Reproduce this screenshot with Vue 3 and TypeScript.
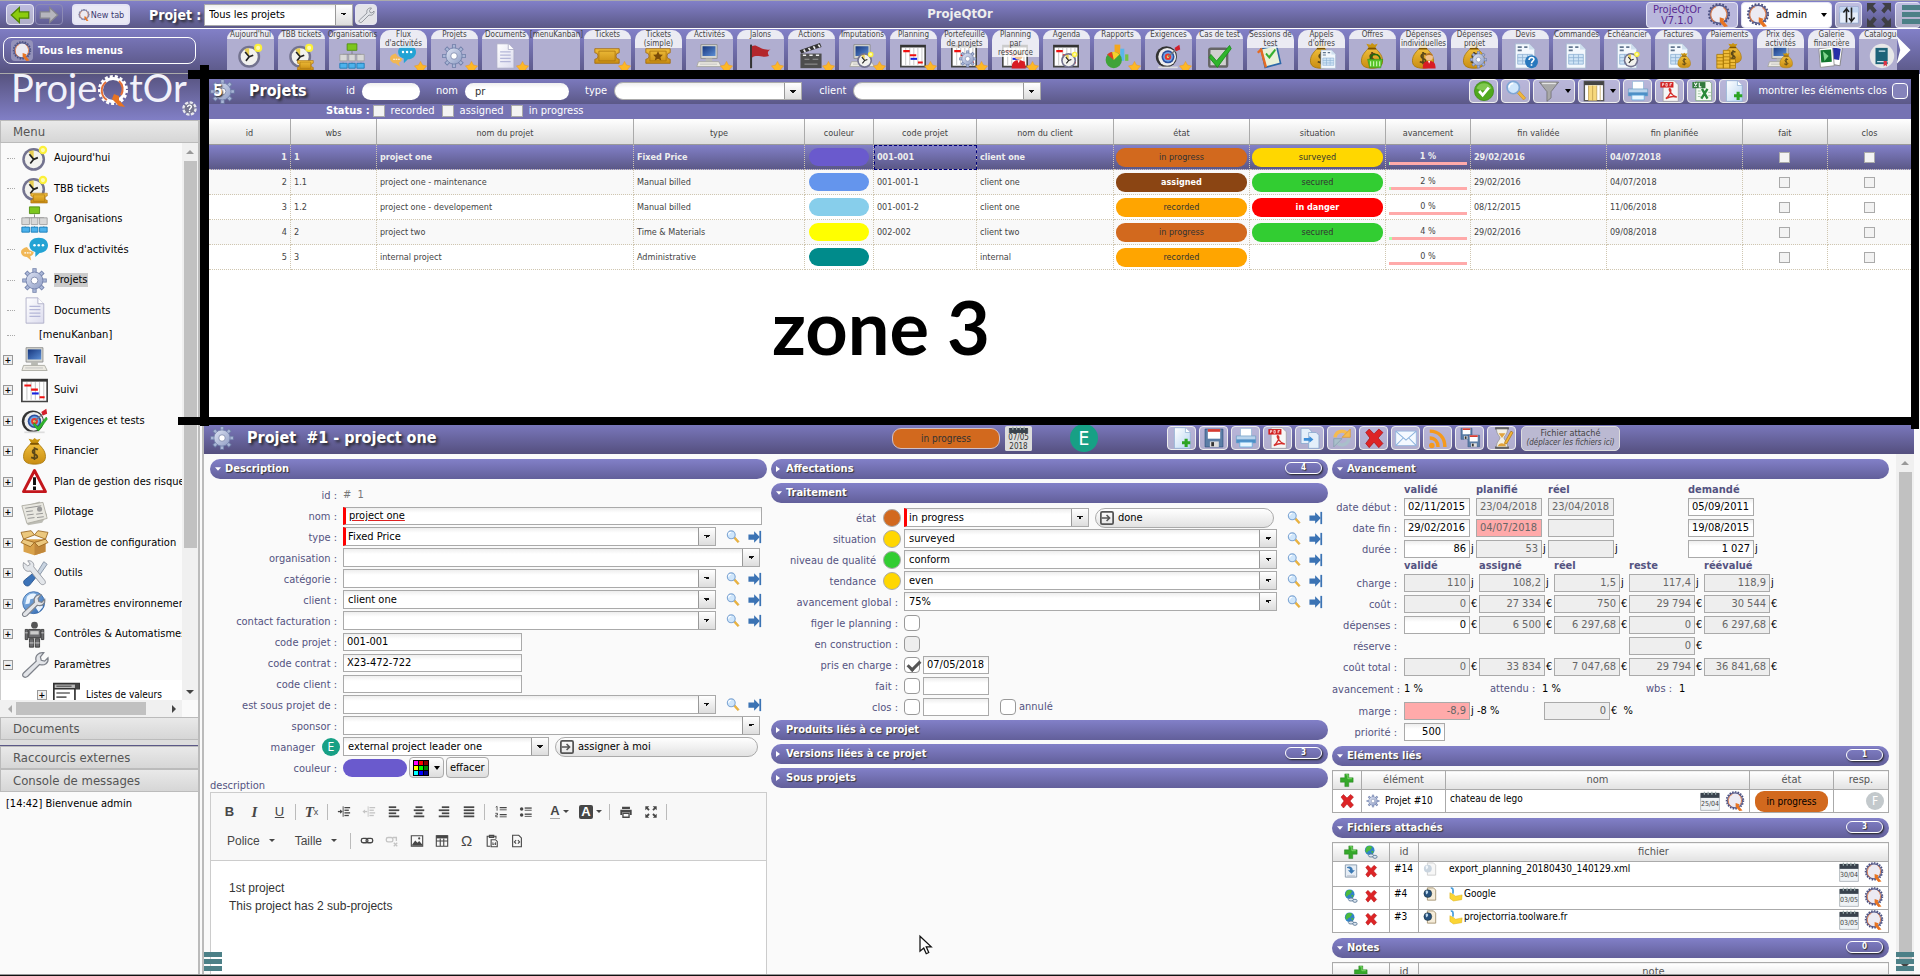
<script setup lang="ts">
import { h } from 'vue'

const at = (x: number, y: number, s: number, body: string) => `<g transform="translate(${x} ${y}) scale(${s})">${body}</g>`

const gearTeeth = '<g stroke="#6f7ea8" stroke-width="5"><path d="M16 1.500v29M1.500 16h29M5.800 5.800l20.400 20.400M26.200 5.800L5.800 26.200"/></g><g stroke="#a9b6d6" stroke-width="3"><path d="M16 2.500v27M2.500 16h27M6.500 6.500l19 19M25.500 6.500L6.500 25.500"/></g>'
const gear = gearTeeth + '<circle cx="16" cy="16" r="10" fill="url(#gSteel)" stroke="#6f7ea8"/><circle cx="16" cy="16" r="4" fill="#fff" stroke="#7b87aa"/>'
const clock = '<circle cx="15" cy="17" r="13.500" fill="#73738f"/><circle cx="15" cy="17" r="10.500" fill="#f2f2ee"/><path d="M15 17L9 8a10.500 10.500 0 0 1 6-1.500z" fill="#e8cf55"/><path d="M10 11l5 6-4 5M15 17l5-2" fill="none" stroke="#222" stroke-width="2"/><circle cx="26" cy="6" r="5" fill="#fbf03a"/><circle cx="26" cy="6" r="2.500" fill="#fffbb0"/>'
const ticket = '<path d="M1 7h30v5a4 4 0 0 0 0 8v5H1v-5a4 4 0 0 0 0-8z" fill="url(#gGold)" stroke="#a36a0c"/><path d="M6 10h20v12H6z" fill="none" stroke="#a9740f"/>'
const doc = '<path d="M6 1h14l7 7v23H6z" fill="url(#gDoc)" stroke="#a9a9c4"/><path d="M20 1v7h7" fill="#fff" stroke="#a9a9c4"/><path d="M10 11h13M10 15h13M10 19h13M10 23h13" stroke="#b4b6d8" stroke-width="1.500"/>'
const form = '<path d="M4 1h17l7 7v23H4z" fill="#f3f8fd" stroke="#9fb4cc"/><path d="M21 1v7h7" fill="#cfe0ef"/><path d="M7 5h5M15 5h4M7 9h5" stroke="#61768f" stroke-width="2"/><path d="M7 14h18v12H7zM7 18h18M7 22h18M13 14v12M19 14v12" fill="#cfe4f6" stroke="#8fb2d4"/>'
const pc = '<path d="M6 2h20v17H6z" fill="#d7d8d2" stroke="#888"/><path d="M8 4h16v12H8z" fill="url(#gScreen)"/><path d="M12 19h8v4h-8z" fill="#b9bab4"/><path d="M3 23h25l3 6H1z" fill="#eceae2" stroke="#a5a59d"/><path d="M5 26h21" stroke="#bbb"/>'
const bag = '<path d="M12 6l-3-5 5 1 2-2 3 2 4-1-3 5z" fill="#c99410"/><path d="M12 6h8c3 4 9 8 9 16 0 6-4 9-13 9S3 28 3 22c0-8 6-12 9-16z" fill="url(#gGold)" stroke="#a87708"/><path d="M11 7h10" stroke="#7b5200" stroke-width="2"/><path d="M20 14c-5-3-9 3-4 5s5 7-4 4M16 11v15" fill="none" stroke="#5a4718" stroke-width="2"/>'
const gantt = '<path d="M1 3h30v26H1z" fill="#fff" stroke="#444" stroke-width="2"/><path d="M1 4h30" stroke="#333" stroke-width="3"/><path d="M7 6v21M12 6v21M17 6v21M22 6v21M27 6v21" stroke="#bbb"/><path d="M4 10h8M12 15h8M22 24h6" stroke="#f01010" stroke-width="2.500"/><path d="M13 19.500h8" stroke="#1522e0" stroke-width="2.500"/>'
const target = '<circle cx="14" cy="17" r="13" fill="#333"/><circle cx="15" cy="17" r="11" fill="#eee"/><circle cx="16" cy="17" r="8" fill="#2b4f9e"/><circle cx="16" cy="17" r="6" fill="#6ea4e8"/><circle cx="16" cy="17" r="4" fill="#e8372f"/><circle cx="16" cy="17" r="1.500" fill="#f6e06a"/><path d="M16 17L27 7" stroke="#777" stroke-width="1.500"/><path d="M24 6l6-4 1 6-5 2z" fill="#d31f2b"/><path d="M4 30h24" stroke="#ddd" stroke-width="2"/>'
const tick = '<path d="M6 14l7 8L29 3l2 4-17 23L4 18z" fill="#2fb52c" stroke="#168a17"/>'
const man = '<circle cx="16" cy="9" r="7" fill="#f0c090"/><path d="M9 8c0-8 14-8 14 0-4-3-10-3-14 0z" fill="#b5731e"/><path d="M4 31c0-12 5-14 12-14s12 2 12 14z" fill="#d81c24"/><path d="M14 17l2 5 2-5z" fill="#fff"/>'
const glob = '<circle cx="15" cy="15" r="13" fill="url(#gGlobe)" stroke="#3869a8"/><path d="M7 8c4-5 9-4 11-3l-3 5-4 1-1 5-5 1zM17 14l7 1 2 5-5 6-3-4z" fill="#e9f4ff"/>'
const wrench = '<path d="M3 26L18 12c-2-6 3-11 9-10l-4 5 1 4 4 1 4-4c1 6-4 10-10 8L8 30c-4 3-8-1-5-4z" fill="#e2e4e8" stroke="#7d8189" stroke-width="1.500"/>'
const basket = '<path d="M6 14C7 0 25 0 26 14" fill="none" stroke="#1d6b0e" stroke-width="3"/><path d="M1 13h30l-4 17H5z" fill="#57c328" stroke="#2d8412"/><path d="M7 17v10M13 17v10M19 17v10M25 17v10" stroke="#d9ffc4" stroke-width="2"/>'
const floppy = '<path d="M3 3h26v26H3z" fill="#5b7ea6" stroke="#2d4f7d"/><path d="M7 3h18v14H7z" fill="#fff"/><path d="M7 3h18v4H7z" fill="#d73c32"/><path d="M10 21h13v8H10z" fill="#ddd"/><path d="M12 22h4v6h-4z" fill="#333"/>'
const linkGlobe = '<circle cx="13" cy="12" r="11" fill="#3183c8"/><path d="M5 6c5-6 12-3 14-1l-5 7-5 2-2 4-4-4zM16 13l6 1-3 6z" fill="#4cba3c"/><g fill="#dce6f0" stroke="#5c7896" stroke-width="2"><ellipse cx="16" cy="24" rx="6" ry="3.500"/><ellipse cx="25" cy="27" rx="5" ry="3.500"/></g>'
const grayLines = (rows: number[][], c = '#474747') => rows.map(([x, y, w, t]) => `<path d="M${x} ${y}h${w}" stroke="${c}" stroke-width="${t || 3}"/>`).join('')

const icons: Record<string, string> = {
  gear, clock, ticket, doc, form, pc, bag, gantt, target, wrench,
  clockTicket: clock + at(11, 17, 0.65, ticket),
  org: '<path d="M16 10v4M5 18v-4h22v4M16 14v4M5 24v2M16 24v2M27 24v2" stroke="#777" fill="none"/><path d="M10 1h12v8H10z" fill="#7cc61e" stroke="#4b8a0b"/><g fill="#d8d8d8" stroke="#9b9b9b"><path d="M1 14h9v8H1zM12 14h8v8h-8zM22 14h9v8h-9z"/></g><g fill="#4cb2ec" stroke="#1478b4"><path d="M1 25h9v6H1zM12 25h8v6h-8zM22 25h9v6h-9z"/></g>',
  chat: '<path d="M21 2c7 0 11 4 11 9s-4 9-10 9l-5 5v-6c-4-1-7-4-7-8 0-5 4-9 11-9z" fill="#23a3d4"/><g fill="#fff"><circle cx="16" cy="11" r="1.500"/><circle cx="21" cy="11" r="1.500"/><circle cx="26" cy="11" r="1.500"/></g><path d="M7 13c-4 1-7 3-7 6s3 6 7 6l5 4-1-5c3-1 4-3 4-5l-5-2-3-4z" fill="#f1b755"/><path d="M4 20h8" stroke="#fff" stroke-width="1.500" stroke-dasharray="2 1"/>',
  ticketStar: ticket + '<path d="M16 10l2 4 4 .5-3 3 1 4-4-2-4 2 1-4-3-3 4-.5z" fill="#7a4c08"/>',
  flag: '<path d="M5 2v29" stroke="#333" stroke-width="2.500"/><path d="M6 4c7-4 10 6 23 4-6 3-2 7-2 8-8 3-14-3-21 2z" fill="#b3262c"/>',
  clap: '<path d="M3 13h26v18H3z" fill="#4d4d4d"/><path d="M2 9L27 0l2 5L4 13z" fill="#333"/><path d="M7 8l2 3M13 6l2 3M19 4l2 3M25 2l2 3M6 15h4M14 15h4M22 15h4" stroke="#eee" stroke-width="2"/><path d="M8 20h6M18 20h7M8 26h16" stroke="#aaa"/>',
  pcClock: pc + at(9, 10, 0.68, clock),
  ganttGear: gantt + at(9, 8, 0.72, gear),
  ganttMan: gantt + at(9, 9, 0.72, man),
  ganttClock: gantt + at(9, 10, 0.68, clock),
  chart: '<path d="M13 2h7v20h-7z" fill="#f4a71e"/><path d="M20 7h5v15h-5z" fill="#58b7ea"/><path d="M26 14h4v8h-4z" fill="#73c343"/><circle cx="12" cy="21" r="10" fill="#3fa339"/><path d="M12 21L4 14a10 10 0 0 1 6-3z" fill="#e33a22"/><path d="M12 21l-2-10a10 10 0 0 1 9 3z" fill="#f7cf2d"/>',
  checkBox: '<rect x="4" y="7" width="22" height="22" rx="2" fill="#d0d0d0" stroke="#666" stroke-width="3"/>' + tick,
  session: '<path d="M5 7l19-4 5 22-19 5z" fill="#e9f1d8" stroke="#2c67a8" stroke-width="2"/><path d="M1 12l4-4 6 22" stroke="#e56b22" stroke-width="3" fill="none"/>' + at(9, 6, 0.45, tick),
  bagDoc: bag + at(13, 8, 0.75, form),
  bagBasket: bag + at(10, 12, 0.62, basket),
  bagMan: bag + at(13, 11, 0.66, man),
  bagGear: bag + at(10, 9, 0.72, gear),
  docQ: form + '<circle cx="24" cy="23" r="8" fill="#2878bd"/><path d="M21 21c0-4 6-4 6-1 0 2-3 2-3 5M24 26v2" stroke="#fff" stroke-width="2" fill="none"/>',
  docClock: form + at(11, 10, 0.66, clock),
  docBag: form + at(14, 12, 0.6, bag),
  coins: at(8, 0, 0.8, bag) + '<g fill="#f0bd3a" stroke="#a87708"><path d="M1 14h8v17H1zM9 9h8v22H9zM17 20h7v11h-7z"/></g><path d="M1 18h8M1 22h8M1 26h8M9 13h8M9 17h8M9 21h8M9 25h8M17 24h7M17 28h7" stroke="#a87708"/>',
  pcBag: pc + at(14, 12, 0.6, bag),
  gallery: '<path d="M14 3l16 3-3 22-16-3z" fill="#fff" stroke="#777"/><path d="M16 5l12 2-2 14-12-2z" fill="#252fa8"/><path d="M1 7l17-2 2 23-17 2z" fill="#fff" stroke="#888"/><path d="M3 9l13-1 1 15-13 1z" fill="#12762f"/><path d="M6 10l7 6-5 6z" fill="#7fd58d"/>',
  book: '<circle cx="16" cy="16" r="15" fill="#e8e8e8"/><path d="M8 6h15v20H8z" fill="#1d6378"/><path d="M10 23h13M12 10h8" stroke="#cfe6ee" stroke-width="1.500"/><path d="M18 22v7l2-2 2 2v-7z" fill="#d34"/>',
  star: '<path d="M16 1l5 9 10 2-7 8 1 11-9-5-9 5 1-11-7-8 10-2z" fill="#fdb827" stroke="#ef8f12"/>',
  targetCheck: target + at(12, 10, 0.62, tick),
  warn: '<path d="M16 3l13 25H3z" fill="#fff" stroke="#c3161c" stroke-width="3.500" stroke-linejoin="round"/><path d="M16 11v9M16 22v4" stroke="#111" stroke-width="3.500"/>',
  news: '<path d="M2 9l20-6 9 16-6 9-17 3z" fill="#bdbdb5"/><path d="M1 8l25-4 5 19-24 6z" fill="#e8e7e0" stroke="#aaa99f"/><path d="M5 11l19-3M6 15l8-1M7 19l8-1M8 23l8-1M18 18l8-1M19 22l8-1" stroke="#888"/><circle cx="22" cy="12" r="3" fill="#999"/>',
  box: '<path d="M3 12h26v15l-13 4-13-4z" fill="#d9a24a"/><path d="M16 15v16l13-4V12z" fill="#c1873a"/><path d="M3 12l13 4-5 5L0 16zM29 12l-13 4 5 5 11-5zM3 12L0 4l12-2 4 5zM29 12l3-8-12-2-4 5z" fill="#ecc87e" stroke="#99651f"/>',
  tools: '<path d="M27 2l4 3-9 13-3-3z" fill="#c8d3e0" stroke="#7f8da0"/><path d="M15 15l4 4-9 11c-4 3-9-3-6-6z" fill="#3c73b8" stroke="#244f8a"/><path d="M3 3l5 4 3-2-3-4c5-1 8 3 7 7l13 16c3 4-2 7-5 4L11 13C6 15 1 10 3 3z" fill="#e3e6ea" stroke="#8d9199"/>',
  globeWrench: glob + at(0, 4, 0.88, wrench),
  robot: '<circle cx="16" cy="5" r="4" fill="#555"/><path d="M9 10h14v10H9zM5 10h3v12H5zM24 10h3v12h-3zM10 21h5v10h-5zM17 21h5v10h-5z" fill="#6d6d70" stroke="#333"/><path d="M11 12h10v4H11z" fill="#ccc"/><path d="M5 14h3M24 14h3M10 26h5M17 26h5" stroke="#ddd"/>',
  list: '<path d="M1 2h30v6H1z" fill="#bbb" stroke="#333" stroke-width="2"/><path d="M26 2h5v6h-5z" fill="#444"/><path d="M1 8h25v23H1z" fill="#fff" stroke="#333" stroke-width="2"/><path d="M4 5h18M4 13h16M4 18h12M4 23h9M4 28h14" stroke="#666" stroke-width="2"/>',
  ok: '<circle cx="16" cy="16" r="14" fill="#4fa81d" stroke="#3a8412"/><path d="M5 12a12 12 0 0 1 22 0c-6 4-16 4-22 0z" fill="#80c84f"/><path d="M9 16l5 6 9-11" fill="none" stroke="#fff" stroke-width="4"/>',
  search: '<path d="M17 18l10 11 3-3-10-11z" fill="#efb73c" stroke="#c98f27"/><circle cx="12" cy="11" r="9" fill="#cfe6fb" stroke="#7fa6d4" stroke-width="2.500"/><path d="M6 11a6 6 0 0 1 6-6" stroke="#fff" stroke-width="2.500" fill="none"/>',
  filter: '<path d="M2 3h28L19 17v9l-6 5V17z" fill="#a8a8a8" stroke="#666"/><path d="M6 5h20" stroke="#e5e5e5" stroke-width="2"/>',
  columns: '<path d="M2 2h28v28H2z" fill="#fff" stroke="#555" stroke-width="2"/><path d="M2 5h28" stroke="#444" stroke-width="5"/><path d="M8 8h12v22H8z" fill="#f7d87c"/><path d="M8 8v22M14 8v22M20 8v22M25 8v22" stroke="#b59447"/>',
  print: '<path d="M8 2h16v12H8z" fill="#fff" stroke="#8db4d6"/><path d="M2 13h28v10H2z" fill="#b9d4ec" stroke="#6f9cc4"/><path d="M2 18h28v5H2z" fill="#4d8fc6"/><path d="M7 22h18v7H7z" fill="#e8f6ff" stroke="#57a6dd"/>',
  pdf: '<path d="M6 1h16l6 6v24H6z" fill="#f6f6f6" stroke="#999"/><path d="M2 3h19v8H2z" fill="#d21f1f"/><path d="M5 9V5h2v2H5M10 5v4h2V5zM16 9V5h3M16 7h2" stroke="#fff" fill="none"/><path d="M10 27c6-5 9-12 6-14s0 9 10 12c-7-3-12 0-16 2z" fill="none" stroke="#d5302b" stroke-width="2"/>',
  excel: '<path d="M7 2h20l3 3v25H7z" fill="#f5fbf3" stroke="#6a9a6c"/><path d="M2 3h19v9H2z" fill="#317a3c"/><path d="M5 4l3 6M9 4l-4 6M12 4v6h3" stroke="#fff" stroke-width="1.500" fill="none"/><path d="M16 13l8 14M24 13l-9 14" stroke="#2a8a3a" stroke-width="3.500"/><path d="M10 16h4M10 20h4M10 24h4M25 18h4M25 23h4" stroke="#7fb384"/>',
  newDoc: '<path d="M5 1h16l7 7v23H5z" fill="url(#gNew)" stroke="#8badd2"/><path d="M21 1v7h7" fill="#fff" stroke="#8badd2"/><path d="M22 17v12M16 23h12" stroke="#2ca423" stroke-width="4.500"/>',
  floppy,
  copy: '<path d="M3 2h11l4 4v18H3z" fill="#e4effa" stroke="#7da2cb"/><path d="M14 8h11l4 4v19H14z" fill="#e4effa" stroke="#7da2cb"/><path d="M7 16h8v-3l6 5-6 5v-3H7z" fill="#3d8ed8"/>',
  refresh: '<g fill="none" stroke-width="5"><path d="M6 15a10 10 0 0 1 17-6" stroke="#f4bb50"/><path d="M26 17a10 10 0 0 1-17 6" stroke="#a9bfca"/></g><path d="M28 3v12H16z" fill="#f4bb50" stroke="#d8982e"/><path d="M4 29V17h12z" fill="#a9bfca" stroke="#7f9aa9"/>',
  cross: '<path d="M4 8l5-5 7 7 7-7 6 5-7 8 7 8-6 6-7-8-7 8-5-6 6-8z" fill="#dd2426" stroke="#a80f12" stroke-linejoin="round"/>',
  mail: '<path d="M1 6h30v21H1z" fill="#f4f9ff" stroke="#89b1dc"/><path d="M1 6l15 13L31 6M1 27l11-11M31 27L20 16" fill="none" stroke="#89b1dc" stroke-width="1.500"/>',
  rss: '<g fill="none" stroke="#f59a1c" stroke-width="5"><path d="M4 6c13 0 22 9 22 23M4 16c7 0 12 5 12 13"/></g><circle cx="7" cy="27" r="4" fill="#f59a1c"/>',
  disks: at(1, 0, 0.62, floppy) + at(11, 10, 0.65, floppy),
  glass: '<path d="M6 2h20M6 30h20" stroke="#555" stroke-width="3"/><path d="M8 3h16c0 8-5 10-5 13s5 5 5 13H8c0-8 5-10 5-13S8 11 8 3z" fill="#f4f1e6" stroke="#888"/><path d="M11 9h10l-5 7zM10 28c1-6 10-6 12 0z" fill="#e0a33c"/><path d="M29 6l3 2-9 16-3 1v-3z" fill="#f4b535" stroke="#a9700f"/>',
  goto: '<path d="M1 10h13V3l13 13-13 13v-7H1z" fill="#3b73b4"/><path d="M28 2v28" stroke="#3b73b4" stroke-width="4"/>',
  enter: '<rect x="2" y="2" width="28" height="28" rx="3" fill="none" stroke="#555" stroke-width="4"/><path d="M4 16h18M15 9l7 7-7 7" fill="none" stroke="#555" stroke-width="3.500"/>',
  plus: '<path d="M11 2h9v9h10v10H20v10h-9V21H1V11h10z" fill="#35a82a" stroke="#1f7a18"/><path d="M13 4h5v9h9" fill="none" stroke="#83db6e" stroke-width="2"/>',
  linkGlobe,
  download: '<path d="M3 2h26v28H3z" fill="#e5edf5" stroke="#8496a8" stroke-width="2"/><path d="M7 7c6-3 13 0 13 7h5l-8 8-8-8h5c0-3-3-5-7-5z" fill="#3b79b4"/><path d="M7 27h18" stroke="#889"/>',
  globeDoc: '<path d="M10 2h14l5 5v23H10z" fill="#f5ecd9" stroke="#a18f6b" stroke-width="2"/><circle cx="11" cy="15" r="9" fill="#27517d" stroke="#122"/><path d="M6 9c5-3 7 2 5 5l-4 3z" fill="#bcd8ee"/>',
  globeDocPale: '<path d="M10 2h14l5 5v23H10z" fill="#f7f7f7" stroke="#ccc" stroke-width="2"/><circle cx="11" cy="15" r="9" fill="#c9d4df"/><path d="M6 9c5-3 7 2 5 5l-4 3z" fill="#f1f6fa"/>',
  note: '<path d="M2 13l8 4 5 4 15-3-1 11-19 3-8-6z" fill="#fbd534" stroke="#d6a90e"/><path d="M4 3c5-2 6 3 5 12" stroke="#4b9fdd" stroke-width="4" fill="none"/>',
  cal: '<path d="M1 4h30v27H1z" fill="#eef2f5" stroke="#8f979f"/><path d="M1 3h30v8H1z" fill="#39424d"/><path d="M7 1v5M13 1v5M19 1v5M25 1v5" stroke="#9aa" stroke-width="2"/>',
  q: '<circle cx="16" cy="15" r="13.500" fill="none" stroke="#4a5080" stroke-width="2.500" stroke-dasharray="2.500 2"/><circle cx="16" cy="15" r="12" fill="#eceaf2" stroke="#54598a" stroke-width="2"/><path d="M10 25a11.500 11.500 0 0 1 2-20M22 6a11 11 0 0 1 2 16" fill="none" stroke="#dd8050" stroke-width="1.500"/><path d="M17 19l6 2-1 3 6 7-5 1-6-7z" fill="#e87422"/>',
  logoQ: '<circle cx="16" cy="15" r="13.500" fill="none" stroke="#fff" stroke-width="3" stroke-dasharray="3 2"/><circle cx="16" cy="15" r="11.500" fill="none" stroke="#fff" stroke-width="3"/><path d="M10 25A11 11 0 0 1 9 7M22 6a11 11 0 0 1 2 14" fill="none" stroke="#e2703a" stroke-width="2"/><path d="M17 19l5 2v4l6 7-6-1-7-7z" fill="#e87422"/>',
  help: '<circle cx="16" cy="16" r="13" fill="#777790" stroke="#e8e8ee" stroke-width="5" stroke-dasharray="7 3"/><path d="M12 13c0-6 9-5 8 0-1 3-4 3-4 6M16 21v3" stroke="#fff" stroke-width="3" fill="none"/>',
  back: '<path d="M15 4v7h15v10H15v7L2 16z" fill="#8ccc0e" stroke="#4e8504" stroke-width="2"/>',
  fwd: '<path d="M17 4v7H2v10h15v7l13-12z" fill="#b6b6bd" stroke="#85858f" stroke-width="2"/>',
  layout: '<path d="M1 3h30v26H1z" fill="#e6eefb" stroke="#7e9cc8"/><path d="M1 4h30v8H1z" fill="#c2d5f0"/><path d="M12 28V6l-5 6M20 4v22l5-6M12 6l4 5M20 26l-4-5" fill="none" stroke="#222" stroke-width="2.500"/>',
  full: '<g fill="#3f3f44"><path d="M0 0h12L8 4l5 6-4 4-5-6-4 4zM32 0v12l-4-4-5 6-4-4 5-6-4-4zM0 32V20l4 4 5-6 4 4-5 6 4 4zM32 32H20l4-4-5-6 4-4 5 6 4-4z"/></g>',
  chevron: '<path d="M8 1l15 15L8 31l4-15z" fill="#fff"/>',
  cursor: '<path d="M8 2v24l6-5 4 9 4-2-4-9h8z" fill="#fff" stroke="#111" stroke-width="2"/>',
  outdent: grayLines([[17, 6, 13, 3], [17, 12, 10, 3], [17, 18, 13, 3], [17, 24, 10, 3], [2, 15, 8, 3]]) + '<path d="M14 3v24" stroke="#474747" stroke-width="2"/><path d="M7 10l6 5-6 5z" fill="#474747"/>',
  indentOff: grayLines([[17, 6, 13, 3], [17, 12, 10, 3], [17, 18, 13, 3], [17, 24, 10, 3], [5, 15, 7, 3]], '#c4c4c4') + '<path d="M14 3v24" stroke="#c4c4c4" stroke-width="2"/><path d="M7 10l-6 5 6 5z" fill="#c4c4c4"/>',
  left: grayLines([[4, 5, 17, 4], [4, 12, 24, 4], [4, 19, 17, 4], [4, 26, 24, 4]]),
  center: grayLines([[8, 5, 16, 4], [4, 12, 24, 4], [8, 19, 16, 4], [4, 26, 24, 4]]),
  right: grayLines([[11, 5, 17, 4], [4, 12, 24, 4], [11, 19, 17, 4], [4, 26, 24, 4]]),
  justify: grayLines([[4, 5, 24, 4], [4, 12, 24, 4], [4, 19, 24, 4], [4, 26, 24, 4]]),
  ol: grayLines([[13, 6, 16, 3], [13, 11, 16, 2], [13, 22, 16, 3], [13, 27, 16, 2]]) + '<path d="M4 5l3-2v10M3 19h5v4H4v4h5" fill="none" stroke="#474747" stroke-width="2"/>',
  ul: grayLines([[13, 7, 16, 3], [13, 12, 16, 2], [13, 21, 16, 3], [13, 26, 16, 2]]) + '<circle cx="6" cy="9" r="4" fill="#474747"/><circle cx="6" cy="23" r="4" fill="#474747"/>',
  printer: '<path d="M7 4h18v5H7zM3 11h26v12h-4v-6H7v6H3z" fill="#474747"/><path d="M9 19h14v9H9z" fill="none" stroke="#474747" stroke-width="3"/>',
  expand: '<g fill="#474747"><path d="M3 3h9L9 6l4 4-3 3-4-4-3 3zM29 3v9l-3-3-4 4-3-3 4-4-3-3zM3 29v-9l3 3 4-4 3 3-4 4 3 3zM29 29h-9l3-3-4-4 3-3 4 4 3-3z"/></g>',
  link: '<g fill="none" stroke="#474747" stroke-width="3"><rect x="3" y="10" width="15" height="10" rx="4"/><rect x="14" y="10" width="15" height="10" rx="4"/></g>',
  unlink: '<g fill="none" stroke="#c4c4c4" stroke-width="3"><rect x="3" y="8" width="15" height="10" rx="4"/><path d="M18 8h8v8M20 20l8 8M28 20l-8 8"/></g>',
  image: '<path d="M3 4h26v24H3z" fill="none" stroke="#474747" stroke-width="2.500"/><path d="M5 24l7-9 5 5 4-4 7 8v3H5z" fill="#474747"/><circle cx="21" cy="10" r="2.500" fill="#474747"/>',
  table: '<path d="M3 4h26v24H3zM3 16h26M12 10v18M20 10v18" fill="none" stroke="#474747" stroke-width="2.500"/><path d="M3 3h26v7H3z" fill="#474747"/>',
  paste: '<path d="M12 28H5V5h20v6M10 3h10v5H10z" fill="none" stroke="#474747" stroke-width="2.500"/><path d="M14 13h10l4 4v12H14z" fill="none" stroke="#474747" stroke-width="2.500"/><path d="M18 19v6l3-3 3 3v-6" fill="none" stroke="#474747" stroke-width="2"/>',
  code: '<path d="M6 3h14l6 6v20H6z" fill="none" stroke="#474747" stroke-width="2.500"/><path d="M14 14l-4 4 4 4M18 14l4 4-4 4" fill="none" stroke="#474747" stroke-width="2.500"/>',
}

const Ico = (p: { n: string }) => h('svg', { viewBox: '0 0 32 32', 'aria-hidden': 'true', innerHTML: icons[p.n] })
Ico.props = ['n']

interface Tab { t: string; i: string; s?: boolean }
const tabs: Tab[] = [
  { t: "Aujourd'hui", i: 'clock' }, { t: 'TBB tickets', i: 'clockTicket' }, { t: 'Organisations', i: 'org' },
  { t: "Flux\nd'activités", i: 'chat', s: true }, { t: 'Projets', i: 'gear', s: true }, { t: 'Documents', i: 'doc', s: true },
  { t: '[menuKanban]', i: '' }, { t: 'Tickets', i: 'ticket', s: true }, { t: 'Tickets\n(simple)', i: 'ticketStar' },
  { t: 'Activités', i: 'pc', s: true }, { t: 'Jalons', i: 'flag', s: true }, { t: 'Actions', i: 'clap', s: true },
  { t: 'Imputations', i: 'pcClock', s: true }, { t: 'Planning', i: 'gantt', s: true }, { t: 'Portefeuille\nde projets', i: 'ganttGear', s: true },
  { t: 'Planning\npar\nressource', i: 'ganttMan', s: true }, { t: 'Agenda', i: 'ganttClock' }, { t: 'Rapports', i: 'chart', s: true },
  { t: 'Exigences', i: 'target', s: true }, { t: 'Cas de test', i: 'checkBox' }, { t: 'Sessions de\ntest', i: 'session' },
  { t: "Appels\nd'offres", i: 'bagDoc' }, { t: 'Offres', i: 'bagBasket' }, { t: 'Dépenses\nindividuelles', i: 'bagMan' },
  { t: 'Dépenses\nprojet', i: 'bagGear' }, { t: 'Devis', i: 'docQ' }, { t: 'Commandes', i: 'form' }, { t: 'Echéancier', i: 'docClock' },
  { t: 'Factures', i: 'docBag' }, { t: 'Paiements', i: 'coins' }, { t: 'Prix des\nactivités', i: 'pcBag' },
  { t: 'Galerie\nfinancière', i: 'gallery' }, { t: 'Catalogue', i: 'book' },
]

const tree = [
  { t: "Aujourd'hui", i: 'clock' }, { t: 'TBB tickets', i: 'clockTicket' }, { t: 'Organisations', i: 'org' },
  { t: "Flux d'activités", i: 'chat' }, { t: 'Projets', i: 'gear', on: true }, { t: 'Documents', i: 'doc' },
  { t: '[menuKanban]', i: '' }, { t: 'Travail', i: 'pc', x: '+' }, { t: 'Suivi', i: 'gantt', x: '+' },
  { t: 'Exigences et tests', i: 'targetCheck', x: '+' }, { t: 'Financier', i: 'bag', x: '+' },
  { t: 'Plan de gestion des risques', i: 'warn', x: '+' }, { t: 'Pilotage', i: 'news', x: '+' },
  { t: 'Gestion de configuration', i: 'box', x: '+' }, { t: 'Outils', i: 'tools', x: '+' },
  { t: 'Paramètres environnement', i: 'globeWrench', x: '+' }, { t: 'Contrôles & Automatismes', i: 'robot', x: '+' },
  { t: 'Paramètres', i: 'wrench', x: '−' }, { t: 'Listes de valeurs', i: 'list', x: '+', sub: true },
]

const cols: [string, number][] = [
  ['id', 82], ['wbs', 86], ['nom du projet', 257], ['type', 171], ['couleur', 69], ['code projet', 103], ['nom du client', 137],
  ['état', 136], ['situation', 136], ['avancement', 85], ['fin validée', 136], ['fin planifiée', 136], ['fait', 85], ['clos', 83],
]
const total = cols.reduce((a, c) => a + c[1], 0)

const rows = [
  { id: 1, wbs: '1', nom: 'project one', type: 'Fixed Price', c: '#6a5acd', code: '001-001', client: 'client one', e: 'in progress', s: 'surveyed', p: 1, v: '29/02/2016', f: '04/07/2018' },
  { id: 2, wbs: '1.1', nom: 'project one - maintenance', type: 'Manual billed', c: '#6495ed', code: '001-001-1', client: 'client one', e: 'assigned', s: 'secured', p: 2, v: '29/02/2016', f: '04/07/2018' },
  { id: 3, wbs: '1.2', nom: 'project one - developement', type: 'Manual billed', c: '#87ceeb', code: '001-001-2', client: 'client one', e: 'recorded', s: 'in danger', p: 0, v: '08/12/2015', f: '11/06/2018' },
  { id: 4, wbs: '2', nom: 'project two', type: 'Time & Materials', c: '#ffff00', code: '002-002', client: 'client two', e: 'in progress', s: 'secured', p: 4, v: '29/02/2016', f: '09/08/2018' },
  { id: 5, wbs: '3', nom: 'internal project', type: 'Administrative', c: '#008b8b', code: '', client: 'internal', e: 'recorded', s: '', p: 0, v: '', f: '' },
]
const cls = (s: string) => 'st-' + s.replace(' ', '-')

const fields = [
  { l: 'nom', k: 'text', v: 'project one', req: true }, { l: 'type', k: 'select', v: 'Fixed Price', req: true, nav: true },
  { l: 'organisation', k: 'select', v: '' }, { l: 'catégorie', k: 'select', v: '', nav: true },
  { l: 'client', k: 'select', v: 'client one', nav: true }, { l: 'contact facturation', k: 'select', v: '', nav: true },
  { l: 'code projet', k: 'short', v: '001-001' }, { l: 'code contrat', k: 'short', v: 'X23-472-722' }, { l: 'code client', k: 'short', v: '' },
  { l: 'est sous projet de', k: 'select', v: '', nav: true }, { l: 'sponsor', k: 'select', v: '' },
]
const treat = [
  { l: 'situation', v: 'surveyed', c: '#ffd700' }, { l: 'niveau de qualité', v: 'conform', c: '#32cd32' },
  { l: 'tendance', v: 'even', c: '#ffd700' }, { l: 'avancement global', v: '75%', c: '' },
]
const checks = [
  { l: 'figer le planning' }, { l: 'en construction', off: true }, { l: 'pris en charge', on: true, d: '07/05/2018' },
  { l: 'fait', d: '' }, { l: 'clos', d: '', more: true },
]

interface Cell { v: string; u?: string; ro?: boolean; bad?: boolean; none?: boolean }
const dates: { l: string; c: Cell[] }[] = [
  { l: 'date début', c: [{ v: '02/11/2015' }, { v: '23/04/2018', ro: true }, { v: '23/04/2018', ro: true }, { v: '', none: true }, { v: '05/09/2011' }] },
  { l: 'date fin', c: [{ v: '29/02/2016' }, { v: '04/07/2018', ro: true, bad: true }, { v: '', ro: true }, { v: '', none: true }, { v: '19/08/2015' }] },
  { l: 'durée', c: [{ v: '86', u: 'j' }, { v: '53', u: 'j', ro: true }, { v: '', u: 'j', ro: true }, { v: '', none: true }, { v: '1 027', u: 'j' }] },
]
const ro = (u: string, ...v: string[]): Cell[] => v.map((x) => ({ v: x, u, ro: true, none: x === '' }))
const costs: { l: string; c: Cell[] }[] = [
  { l: 'charge', c: ro('j', '110', '108,2', '1,5', '117,4', '118,9') },
  { l: 'coût', c: ro('€', '0', '27 334', '750', '29 794', '30 544') },
  { l: 'dépenses', c: [{ v: '0', u: '€' }, ...ro('€', '6 500', '6 297,68', '0', '6 297,68')] },
  { l: 'réserve', c: ro('€', '', '', '', '0', '') },
  { l: 'coût total', c: ro('€', '0', '33 834', '7 047,68', '29 794', '36 841,68') },
]
const files = [
  { id: '#14', n: 'export_planning_20180430_140129.xml', d: '30/04', a: 'download', g: 'globeDocPale' },
  { id: '#4', n: 'Google', d: '03/05', a: 'linkGlobe', g: 'globeDoc', note: true },
  { id: '#3', n: 'projectorria.toolware.fr', d: '03/05', a: 'linkGlobe', g: 'globeDoc', note: true },
]
const listTools = [['ok', 'Valider'], ['search', 'Rechercher'], ['filter', 'Filtrer'], ['columns', 'Colonnes'], ['print', 'Imprimer'], ['pdf', 'PDF'], ['excel', 'Excel'], ['newDoc', 'Nouveau']]
const detailTools = [['newDoc', 'Nouveau'], ['floppy', 'Enregistrer'], ['print', 'Imprimer'], ['pdf', 'PDF'], ['copy', 'Copier'], ['refresh', 'Rafraîchir'], ['cross', 'Supprimer'], ['mail', 'Envoyer'], ['rss', 'Flux'], ['disks', 'Mise à jour multiple'], ['glass', 'Historique']]
const ed1b = ['outdent', 'indentOff', 'left', 'center', 'right', 'justify']
const ed2 = ['link', 'unlink', 'image', 'table', 'omega', 'paste', 'code']
const palette = ['#f0f', '#f00', '#800', '#ff0', '#0f0', '#080', '#0ff', '#00f', '#008']
</script>

<template>
  <div class="app">
    <svg class="defs" aria-hidden="true">
      <defs>
        <linearGradient id="gSteel" x2="1" y2="1"><stop stop-color="#dfe5f4" /><stop offset="1" stop-color="#8e9cc4" /></linearGradient>
        <linearGradient id="gGold" x2="0" y2="1"><stop stop-color="#f0bf3c" /><stop offset="1" stop-color="#c98d12" /></linearGradient>
        <linearGradient id="gDoc" x2="1" y2="1"><stop stop-color="#fff" /><stop offset="1" stop-color="#dcdcee" /></linearGradient>
        <linearGradient id="gNew" x2="1" y2="1"><stop stop-color="#fff" /><stop offset="1" stop-color="#b9d6f2" /></linearGradient>
        <linearGradient id="gScreen" x2="1" y2="1"><stop stop-color="#16357c" /><stop offset="1" stop-color="#5c8fd6" /></linearGradient>
        <linearGradient id="gGlobe" x2="1" y2="1"><stop stop-color="#9cc6f0" /><stop offset="1" stop-color="#2a62ac" /></linearGradient>
      </defs>
    </svg>

    <header class="topbar">
      <button class="tb nav" aria-label="Précédent"><Ico n="back" class="i20" /></button>
      <button class="tb nav dim" aria-label="Suivant"><Ico n="fwd" class="i20" /></button>
      <button class="tb newtab"><Ico n="q" class="i12" />New tab</button>
      <label class="plabel" for="proj">Projet :</label>
      <select id="proj" class="sel projsel"><option>Tous les projets</option></select>
      <button class="tb wr" aria-label="Paramètres"><Ico n="wrench" class="i16" /></button>
      <h1>ProjeQtOr</h1>
      <div class="tright">
        <a class="tb version" href="#"><span>ProjeQtOr<br />V7.1.0</span><Ico n="q" class="i24" /></a>
        <button class="tb admin"><Ico n="q" class="i24" />admin<i class="caret" /></button>
        <button class="tb sq" aria-label="Disposition"><Ico n="layout" class="i20" /></button>
        <button class="tb bare" aria-label="Plein écran"><Ico n="full" class="i24" /></button>
        <button class="tb burgerbtn" aria-label="Menu"><span class="burger"><i /><i /><i /></span></button>
      </div>
    </header>

    <div class="body">
      <aside>
        <div class="allmenus"><button><span class="qbox"><Ico n="q" class="i20" /></span>Tous les menus</button></div>
        <div class="logo"><span>Proje</span><Ico n="logoQ" class="logoq" /><span>tOr</span><Ico n="help" class="helpico" /></div>
        <button class="acc">Menu</button>
        <div class="treewrap">
          <nav class="tree">
            <a v-for="n in tree" :key="n.t" href="#" :class="{ sub: n.sub, flat: !n.i }">
              <span v-if="n.x" class="exp">{{ n.x }}</span><span v-else class="dots" />
              <Ico v-if="n.i" :n="n.i" class="i27" />
              <span class="tl" :class="{ on: n.on }">{{ n.t }}</span>
            </a>
          </nav>
          <div class="vbar"><i class="up" /><b class="treethumb" /><i class="down" /></div>
        </div>
        <div class="hbar"><i class="lf" /><b /><i class="rt" /></div>
        <button class="acc docs">Documents</button>
        <div class="hsplit" />
        <button class="acc">Raccourcis externes</button>
        <button class="acc">Console de messages</button>
        <div class="console">[14:42] Bienvenue admin</div>
      </aside>

      <main>
        <div class="strip">
          <nav class="tabs">
            <a v-for="t in tabs" :key="t.t" href="#" class="tab">
              <span class="tt">{{ t.t }}</span>
              <Ico v-if="t.i" :n="t.i" class="tabico" />
              <Ico v-if="t.s" n="star" class="tabstar" />
            </a>
          </nav>
          <button class="more" aria-label="Suite"><Ico n="chevron" class="chev" /></button>
        </div>

        <section class="list">
          <div class="lhead">
            <Ico n="gear" class="i27" /><b class="five">5</b>
            <h2>Projets</h2>
            <label for="fid">id</label><input id="fid" class="round w58" />
            <label for="fnom">nom</label><input id="fnom" class="round w104" value="pr" />
            <label for="ftype">type</label><select id="ftype" class="sel rsel"><option></option></select>
            <label for="fcl">client</label><select id="fcl" class="sel rsel"><option></option></select>
            <div class="ltools">
              <button v-for="t in listTools" :key="t[0]" class="tool" :aria-label="t[1]" :class="{ wide: t[0] === 'filter' || t[0] === 'columns' }">
                <Ico :n="t[0]" class="i22" /><i v-if="t[0] === 'filter' || t[0] === 'columns'" class="caret" />
              </button>
              <label for="closed">montrer les éléments clos</label><input id="closed" type="checkbox" class="cb ghost" />
            </div>
          </div>
          <div class="lstatus">
            <b>Status :</b>
            <label v-for="s in ['recorded', 'assigned', 'in progress']" :key="s"><input type="checkbox" class="sqcb" />{{ s }}</label>
          </div>
          <table class="grid">
            <colgroup><col v-for="c in cols" :key="c[0]" :style="{ width: (c[1] / total) * 100 + '%' }" /></colgroup>
            <thead><tr><th v-for="c in cols" :key="c[0]">{{ c[0] }}</th></tr></thead>
            <tbody>
              <tr v-for="r in rows" :key="r.id" :class="{ selrow: r.id === 1 }">
                <td class="num">{{ r.id }}</td><td>{{ r.wbs }}</td><td>{{ r.nom }}</td><td>{{ r.type }}</td>
                <td class="pc"><span class="pill" :style="{ background: r.c }" /></td>
                <td :class="{ focus: r.id === 1 }">{{ r.code }}</td><td>{{ r.client }}</td>
                <td class="pc"><span class="pill big" :class="cls(r.e)">{{ r.e }}</span></td>
                <td class="pc"><span v-if="r.s" class="pill big" :class="cls(r.s)">{{ r.s }}</span></td>
                <td class="pc"><div class="pg">{{ r.p }} %</div><div class="bar"><i :style="{ width: r.p + '%' }" /></div></td>
                <td>{{ r.v }}</td><td>{{ r.f }}</td>
                <td class="ck"><input type="checkbox" class="mini" aria-label="fait" /></td>
                <td class="ck"><input type="checkbox" class="mini" aria-label="clos" /></td>
              </tr>
            </tbody>
          </table>
          <div class="zone">zone 3</div>
        </section>

        <section class="detail">
          <div class="dhead">
            <Ico n="gear" class="i26" />
            <h2>Projet &nbsp;#1 - project one</h2>
            <div class="dstate">
              <span class="pill dpill st-in-progress">in progress</span>
              <span class="calbig"><Ico n="cal" class="calhead" /><span>07/05<br />2018</span></span>
              <span class="ava big">E</span>
            </div>
            <div class="dtools">
              <button v-for="t in detailTools" :key="t[0]" class="tool" :aria-label="t[1]"><Ico :n="t[0]" class="i22" /></button>
              <button class="drop"><span>Fichier attaché<br /><em>(déplacer les fichiers ici)</em></span></button>
            </div>
          </div>

          <div class="dbody">
            <div class="columns">
              <div class="col">
                <h3 class="open">Description</h3>
                <div class="form desc">
                  <div class="row"><span class="lab">id :</span><span class="idv">#&nbsp; 1</span></div>
                  <div v-for="f in fields" :key="f.l" class="row">
                    <label class="lab" :for="f.l">{{ f.l }} :</label>
                    <select v-if="f.k === 'select'" :id="f.l" class="sel grow" :class="{ req: f.req, solo: !f.nav }"><option>{{ f.v }}</option></select>
                    <input v-else :id="f.l" :value="f.v" class="inp" :class="[f.k === 'short' ? 'w179' : 'grow', { req: f.req, spell: f.req }]" />
                    <template v-if="f.nav"><button class="ib first" aria-label="Rechercher"><Ico n="search" class="i14" /></button><button class="ib" aria-label="Aller à"><Ico n="goto" class="i14" /></button></template>
                  </div>
                  <div class="row">
                    <label class="lab dot" for="manager">manager</label><span class="ava">E</span>
                    <select id="manager" class="sel w206"><option>external project leader one</option></select>
                    <button class="cap"><Ico n="enter" class="i14" />assigner à moi</button>
                  </div>
                  <div class="row">
                    <span class="lab">couleur :</span><span class="swatch" />
                    <button class="btn" aria-label="Palette"><span class="pal"><i v-for="p in palette" :key="p" :style="{ background: p }" /></span><i class="caret" /></button>
                    <button class="btn">effacer</button>
                  </div>
                </div>
                <label class="dl" for="rich">description</label>
                <div class="editor">
                  <div class="etb">
                    <div class="erow">
                      <button class="e"><b>B</b></button><button class="e"><em>I</em></button><button class="e"><u>U</u></button><i class="sep" />
                      <button class="e"><em>T</em><sub>x</sub></button><i class="sep" />
                      <button v-for="i in ed1b" :key="i" class="e" :aria-label="i"><Ico :n="i" class="i14" /></button><i class="sep" />
                      <button class="e" aria-label="ol"><Ico n="ol" class="i14" /></button><button class="e" aria-label="ul"><Ico n="ul" class="i14" /></button>
                      <button class="e ew first"><b class="ac">A</b><i class="caret" /></button><button class="e ew"><b class="ab">A</b><i class="caret" /></button><i class="sep" />
                      <button class="e" aria-label="imprimer"><Ico n="printer" class="i14" /></button><button class="e" aria-label="agrandir"><Ico n="expand" class="i14" /></button><i class="sep" />
                    </div>
                    <div class="erow">
                      <button class="e et">Police<i class="caret" /></button><button class="e et">Taille<i class="caret" /></button><i class="sep" />
                      <button v-for="i in ed2" :key="i" class="e" :aria-label="i"><b v-if="i === 'omega'" class="om">Ω</b><Ico v-else :n="i" class="i14" /></button>
                    </div>
                  </div>
                  <div id="rich" class="etext" contenteditable="true">1st project<br />This project has 2 sub-projects</div>
                </div>
              </div>

              <div class="col">
                <h3>Affectations<span class="cnt">4</span></h3>
                <h3 class="open">Traitement</h3>
                <div class="form treat">
                  <div class="row">
                    <label class="lab dot" for="etat">état</label><span class="disc st-in-progress" />
                    <select id="etat" class="sel req w185"><option>in progress</option></select>
                    <button class="cap"><Ico n="enter" class="i14" />done</button>
                    <button class="ib first" aria-label="Rechercher"><Ico n="search" class="i14" /></button><button class="ib" aria-label="Aller à"><Ico n="goto" class="i14" /></button>
                  </div>
                  <div v-for="t in treat" :key="t.l" class="row">
                    <label class="lab" :class="{ dot: t.c }" :for="t.l">{{ t.l }}{{ t.c ? '' : ' :' }}</label>
                    <span v-if="t.c" class="disc" :style="{ background: t.c }" />
                    <select :id="t.l" class="sel grow"><option>{{ t.v }}</option></select>
                    <button class="ib first" aria-label="Rechercher"><Ico n="search" class="i14" /></button><button class="ib" aria-label="Aller à"><Ico n="goto" class="i14" /></button>
                  </div>
                  <div v-for="c in checks" :key="c.l" class="row">
                    <label class="lab" :for="'c' + c.l">{{ c.l }} :</label>
                    <input :id="'c' + c.l" type="checkbox" class="cb" :class="{ off: c.off }" :checked="c.on" />
                    <input v-if="c.d !== undefined" class="inp dt" :value="c.d" :aria-label="'date ' + c.l" />
                    <label v-if="c.more" class="ann"><input type="checkbox" class="cb" />annulé</label>
                  </div>
                </div>
                <h3>Produits liés à ce projet</h3>
                <h3>Versions liées à ce projet<span class="cnt">3</span></h3>
                <h3>Sous projets</h3>
              </div>

              <div class="col">
                <h3 class="open">Avancement</h3>
                <div class="av">
                  <div class="g1 hd"><span /><b>validé</b><b>planifié</b><b>réel</b><span /><b>demandé</b></div>
                  <div v-for="d in dates" :key="d.l" class="g1">
                    <span class="lab">{{ d.l }} :</span>
                    <span v-for="(c, k) in d.c" :key="k" class="cell"><template v-if="!c.none"><input class="inp" :aria-label="d.l" :value="c.v" :class="{ ro: c.ro, bad: c.bad, r: c.u }" />{{ c.u }}</template></span>
                  </div>
                  <div class="g2 hd h13"><span /><b>validé</b><b>assigné</b><b>réel</b><b>reste</b><b>réévalué</b></div>
                  <div v-for="d in costs" :key="d.l" class="g2">
                    <span class="lab">{{ d.l }} :</span>
                    <span v-for="(c, k) in d.c" :key="k" class="cell"><template v-if="!c.none"><input class="inp r" :aria-label="d.l" :value="c.v" :class="{ ro: c.ro }" />{{ c.u }}</template></span>
                  </div>
                  <div class="g3 h23"><span class="lab">avancement :</span><span>1 %</span><span class="lb">attendu :</span><span>1 %</span><span class="lb">wbs :</span><span>1</span></div>
                  <div class="g4"><span class="lab">marge :</span><span class="cell"><input class="inp ro bad r" aria-label="marge" value="-8,9" />j -8 %</span><span class="cell"><input class="inp ro r" aria-label="marge coût" value="0" />€ &nbsp;%</span></div>
                  <div class="g4"><label class="lab" for="prio">priorité :</label><span class="cell"><input id="prio" class="inp r w41" value="500" /></span></div>
                </div>
                <h3 class="open">Eléments liés<span class="cnt">1</span></h3>
                <table class="sub t1">
                  <colgroup><col class="c29" /><col class="c84" /><col /><col class="c84" /><col class="c55" /></colgroup>
                  <thead><tr><th><Ico n="plus" class="i14" /></th><th>élément</th><th>nom</th><th>état</th><th>resp.</th></tr></thead>
                  <tbody><tr>
                    <td class="mid"><Ico n="cross" class="i16" /></td>
                    <td><span class="fl"><Ico n="gear" class="i14" />Projet #10</span></td>
                    <td><span class="fl"><span class="raise">chateau de lego</span><span class="push"><span class="calsm"><Ico n="cal" class="i20" /><span>25/04</span></span><Ico n="q" class="i20" /></span></span></td>
                    <td class="pc"><span class="pill spill st-in-progress">in progress</span></td>
                    <td class="rr"><span class="ava pale">F</span></td>
                  </tr></tbody>
                </table>
                <h3 class="open">Fichiers attachés<span class="cnt">3</span></h3>
                <table class="sub t2">
                  <colgroup><col class="c57" /><col class="c29" /><col /></colgroup>
                  <thead><tr><th><span class="pair"><Ico n="plus" class="i14" /><Ico n="linkGlobe" class="i14" /></span></th><th>id</th><th>fichier</th></tr></thead>
                  <tbody><tr v-for="f in files" :key="f.id">
                    <td class="mid"><span class="pair"><Ico :n="f.a" class="i14" /><Ico n="cross" class="i14" /></span></td>
                    <td>{{ f.id }}</td>
                    <td><span class="fl"><Ico :n="f.g" class="i14" /><span class="fname"><Ico v-if="f.note" n="note" class="i14" />{{ f.n }}</span><span class="push"><span class="calsm"><Ico n="cal" class="i20" /><span>{{ f.d }}</span></span><Ico n="q" class="i20" /></span></span></td>
                  </tr></tbody>
                </table>
                <h3 class="open">Notes<span class="cnt">0</span></h3>
                <table class="sub t2">
                  <colgroup><col class="c57" /><col class="c29" /><col /></colgroup>
                  <thead><tr><th><Ico n="plus" class="i14" /></th><th>id</th><th>note</th></tr></thead>
                </table>
              </div>
            </div>
            <div class="vbar dv"><i class="up" /><b class="dthumb" /><i class="down" /></div>
          </div>
          <span class="burger float bl"><i /><i /><i /></span>
          <span class="burger float br"><i /><i /><i /></span>
        </section>
      </main>
    </div>
    <footer />

    <div class="ink top" /><div class="ink lft" /><div class="ink rgt" /><div class="ink bot" />
    <Ico n="cursor" class="cursor" />
  </div>
</template>

<style>
html, body { margin: 0; overflow: hidden; }
</style>

<style scoped>
.app { position: relative; height: 100vh; display: flex; flex-direction: column; overflow: hidden; background: #fafafa; color: #000; font: 11px/14px "DejaVu Sans Condensed", "DejaVu Sans", sans-serif; box-sizing: border-box; border-top: 1px solid #aaa; }
.app * { box-sizing: border-box; }
button, input, select { font: inherit; color: inherit; margin: 0; padding: 0; border: 0; background: none; min-width: 0; }
a { color: inherit; text-decoration: none; }
svg { flex: none; overflow: visible; }
.defs { position: absolute; width: 0; height: 0; }
.i12 { width: 12px; height: 12px; } .i14 { width: 14px; height: 14px; } .i16 { width: 16px; height: 16px; }
.i20 { width: 20px; height: 20px; } .i22 { width: 22px; height: 22px; } .i24 { width: 24px; height: 24px; }
.i26 { width: 26px; height: 26px; } .i27 { width: 27px; height: 27px; }
.caret { flex: none; width: 0; height: 0; border: 3px solid transparent; border-top: 4px solid #000; border-bottom: 0; }

.topbar { flex: none; height: 28px; display: flex; align-items: center; padding: 0 0 0 6px; background: linear-gradient(#8280c8, #5b5887); border-bottom: 1px solid #fff; position: relative; }
.tb { display: flex; align-items: center; justify-content: center; height: 21px; border: 1px solid #e4e4f4; border-radius: 4px; background: rgba(255, 255, 255, .5); }
.nav { width: 28px; } .nav.dim { background: none; border-color: #8d8bb5; margin-left: 1px; }
.newtab { width: 58px; margin-left: 9px; font-size: 9px; color: #3c3a70; gap: 1px; background: #e9e9f5; border-width: 2px; }
.plabel { margin-left: 19px; font-size: 14px; font-weight: bold; color: #fff; text-shadow: 2px 2px 3px #222; width: 55px; white-space: nowrap; }
.sel { appearance: none; height: 19px; border: 1px solid #aaa; border-radius: 0; padding: 0 20px 0 4px; background-color: #fff; background-repeat: no-repeat; background-image: linear-gradient(45deg, transparent 50%, #111 50%), linear-gradient(135deg, #111 50%, transparent 50%), linear-gradient(#999, #999), linear-gradient(#fff, #ddd), linear-gradient(#eee, #fff); background-position: right 8px center, right 5px center, right 16px top, right top, left top; background-size: 3px 3px, 3px 3px, 1px 100%, 16px 100%, 100% 5px; }
.projsel { width: 149px; height: 22px; }
.wr { width: 22px; margin-left: 2px; background: #e4e4e8; }
h1 { position: absolute; left: 0; right: 0; top: 0; margin: 0; text-align: center; font-size: 13px; line-height: 26px; color: #eee; pointer-events: none; }
.tright { margin-left: auto; display: flex; align-items: center; gap: 3px; position: relative; }
.version { width: 92px; height: 26px; color: #5a2a92; font-size: 11px; line-height: 11px; text-align: center; gap: 6px; background: #b9b7dc; }
.admin { width: 91px; height: 26px; background: #fff; gap: 6px; } .admin .caret { margin-left: 8px; }
.sq { width: 27px; height: 26px; } .bare { width: 27px; height: 26px; background: none; border: 0; }
.burgerbtn { width: 25px; height: 26px; justify-content: flex-end; border-right: 0; }
.burger { display: flex; flex-direction: column; gap: 2px; width: 18px; }
.burger i { height: 5px; background: #4c8087; }

.body { flex: 1; min-height: 0; display: flex; }
aside { flex: none; width: 200px; display: flex; flex-direction: column; border-right: 2px solid #bbb; }
.allmenus { flex: none; height: 45px; margin-right: -2px; padding: 8px 4px 10px 3px; background: linear-gradient(#7f7dc4, #56527f); border-bottom: 1px solid #aaa; }
.allmenus button { display: flex; align-items: center; gap: 5px; width: 193px; height: 27px; border: 1px solid #fff; border-radius: 8px; padding: 0 7px; color: #fff; font-size: 11px; font-weight: bold; }
.qbox { display: flex; width: 22px; height: 21px; align-items: center; justify-content: center; background: #9492ba; border-radius: 4px; }
.logo { flex: none; display: flex; align-items: flex-start; height: 46px; padding: 0 0 0 11px; margin-right: -2px; background: linear-gradient(#57537f, #817fc6); color: #f1f1fa; font: 38px/48px Lato, sans-serif; position: relative; }
.logo span { height: 45px; margin-top: -11px; }
.logoq { width: 32px; height: 32px; margin: 1px 0 0; }
.helpico { position: absolute; right: 3px; bottom: 4px; width: 15px; height: 15px; }
.acc { flex: none; height: 23px; padding: 0 0 0 12px; text-align: left; font-size: 13px; color: #555; background: linear-gradient(#e9e9e9, #d6d6d6); border-top: 1px solid #bbb; border-bottom: 1px solid #bbb; border-left: 1px solid #bbb; }
.treewrap { flex: 1; min-height: 0; display: flex; border-left: 1px solid #ccc; background: #fafafa; }
.tree { flex: 1; min-width: 0; overflow: hidden; }
.tree a { display: flex; align-items: center; height: 31px; gap: 6px; white-space: nowrap; padding-left: 2px; }
.tree a:nth-child(odd) { height: 30px; }
.tree a.flat { height: 18px; }
.tree a.sub { padding-left: 36px; }
.dots { width: 8px; margin: 0 0 0 4px; border-top: 1px dotted #aaa; flex: none; }
.exp { flex: none; width: 10px; height: 10px; margin-right: 2px; line-height: 8px; font-size: 9px; font-weight: bold; text-align: center; border: 1px solid #999; background: #eee; }
.tree a.sub .exp { margin-right: 0; }
.flat .tl { margin-left: 18px; }
.tl.on { background: #ccc; }
.vbar { flex: none; width: 16px; background: #f0f0f0; position: relative; display: flex; flex-direction: column; align-items: center; }
.vbar b { width: 13px; background: #c1c1c1; }
.treethumb { height: 387px; }
.up, .down, .lf, .rt { flex: none; width: 0; height: 0; border: 4px solid transparent; }
.up { border-bottom-color: #999; margin: 7px 0; border-top: 0; }
.down { border-top-color: #444; border-bottom: 0; margin-top: auto; margin-bottom: 6px; }
.hbar { flex: none; height: 17px; margin-right: 16px; background: #f0f0f0; display: flex; align-items: center; padding: 0 6px; }
.hbar b { height: 13px; width: 130px; margin-left: 4px; background: #c1c1c1; }
.lf { border-right-color: #aaa; border-left: 0; margin-left: 2px; } .rt { border-left-color: #444; border-right: 0; margin-left: auto; }
.hsplit { flex: none; height: 6px; border-bottom: 1px solid #5b5887; background: #ddd; }
.console { flex: none; height: 182px; padding: 5px 6px; }

main { flex: 1; min-width: 0; display: flex; flex-direction: column; }
.strip { flex: none; height: 45px; display: flex; padding: 1px 8px 0 27px; background: linear-gradient(#8280c8, #5b5887); }
.tabs { flex: 1; min-width: 0; display: flex; gap: 4px; overflow: hidden; }
.tab { flex: none; width: 47px; height: 44px; position: relative; border-radius: 10px 10px 0 0; background: #b0aed0; font-size: 8px; line-height: 9px; text-align: center; color: #444; }
.tt { position: relative; z-index: 1; display: flex; justify-content: center; white-space: pre; border-radius: 10px 10px 0 0; background: rgba(255, 255, 255, .75); }
.tabico { position: absolute; width: 26px; height: 26px; left: 10px; top: 13px; }
.tabstar { position: absolute; right: 0; top: 31px; width: 13px; height: 13px; }
.more { width: 15px; } .chev { width: 30px; height: 40px; margin-left: -8px; }

.list { flex: none; height: 347px; margin: 0 9px; background: #fff; position: relative; }
.lhead { height: 30px; padding: 4px 3px 0 0; display: flex; align-items: center; color: #fff; background: linear-gradient(#8280c8, #5b5887); position: relative; white-space: nowrap; }
.five { width: 14px; margin-left: -25px; margin-right: 11px; font-size: 15px; text-align: center; color: #fff; text-shadow: 1px 1px 2px #000; position: relative; }
h2 { margin: 0; font-size: 16px; color: #fff; text-shadow: 2px 2px 3px #222; white-space: nowrap; }
.lhead h2 { width: 97px; margin-left: 13px; }
.lhead > label { margin-right: 7px; }
.round { height: 17px; border-radius: 9px; background: linear-gradient(#eee, #fff 5px); color: #333; padding-left: 10px; margin-right: 16px; }
.w58 { width: 58px; } .w104 { width: 104px; }
.rsel { width: 188px; height: 18px; border-radius: 9px 0 0 9px; margin-right: 17px; }
.ltools { margin-left: auto; display: flex; align-items: center; gap: 3px; }
.ltools label { margin: 0 2px 0 7px; }
.tool { width: 29px; height: 24px; display: flex; align-items: center; justify-content: center; border: 1px solid #eee; border-radius: 4px; background: rgba(205, 203, 228, .75); }
.tool.wide { width: 42px; gap: 5px; }
.cb { appearance: none; flex: none; width: 16px; height: 16px; border: 1px solid #999; border-radius: 4px; background: #fff; position: relative; }
.cb.ghost { background: #8583ba; border-color: #fff; }
.cb.off { background: #eee; }
.cb:checked::after { content: ""; position: absolute; left: 5px; top: 0; width: 5px; height: 10px; border: solid #555; border-width: 0 3px 3px 0; transform: rotate(45deg); }
.lstatus { height: 15px; padding: 0 0 2px 117px; display: flex; align-items: center; color: #fff; background: #7673b3; gap: 7px; }
.lstatus b { margin-right: -4px; }
.lstatus label { display: flex; align-items: center; gap: 6px; }
.sqcb, .mini { appearance: none; width: 12px; height: 12px; border: 1px solid #aaa; background: #f3f3f3; }
.mini { width: 11px; height: 11px; display: block; margin: 0 auto; }
.grid { width: 100%; table-layout: fixed; border-collapse: separate; border-spacing: 0; font-size: 9px; line-height: 12px; color: #444; }
.grid th { height: 26px; padding: 3px 0 0; font-weight: normal; background: linear-gradient(#fff, #ddd); border-right: 1px solid #aaa; border-bottom: 1px solid #999; }
.grid td { height: 25px; padding: 0 3px; border-right: 1px dotted #cfc6b0; border-bottom: 1px dotted #cfc6b0; white-space: nowrap; background: #fff; overflow: hidden; }
.grid tr > :last-child { border-right: 0; }
.grid tr:nth-child(even) td { background: #f9f9f9; }
.grid .selrow td { background: linear-gradient(#8280c8, #5b5887); color: #eee; font-weight: bold; }
.grid .num { text-align: right; }
.grid td.focus { outline: 1px dashed #00007a; outline-offset: -1px; }
.pill { display: block; height: 18px; border-radius: 9px; margin: 0 1px; text-align: center; }
.pill.big { height: 19px; line-height: 19px; font-weight: normal; color: #333; margin: 0 -1px; }
.pill.st-assigned, .pill.st-in-danger { color: #fff; font-weight: bold; }
.st-in-progress { background: #d2691e; } .st-assigned { background: #8b4513; } .st-recorded { background: #ffa500; }
.st-surveyed { background: #ffd700; } .st-secured { background: #32cd32; } .st-in-danger { background: #f00; }
.pg { text-align: center; line-height: 12px; }
.bar { height: 3px; background: #faa; } .bar i { display: block; height: 3px; background: #afa; }
.zone { position: absolute; left: 563px; top: 208px; font: bold 74px/90px Lato, sans-serif; color: #000; }

.detail { flex: 1; min-height: 0; display: flex; flex-direction: column; margin: 0 6px 0 2px; border-left: 2px solid #bbb; position: relative; }
.dhead { flex: none; height: 33px; padding-top: 1px; display: flex; align-items: center; background: linear-gradient(#7f7dc4, #544f7e); position: relative; padding-left: 5px; }
.dhead h2 { margin-left: 12px; }
.dstate { position: absolute; left: 688px; display: flex; align-items: center; }
.dpill { width: 108px; height: 21px; line-height: 19px; border: 1px solid #d0c0c8; font-size: 10px; color: #333; margin: 0 5px 0 0; }
.calbig { width: 27px; height: 25px; position: relative; background: #ddd; border-radius: 2px; font-size: 8px; line-height: 9px; text-align: center; color: #333; overflow: hidden; }
.calbig span { position: absolute; left: 0; right: 0; top: 7px; background: #ddd; }
.calhead { width: 27px; height: 20px; }
.ava { flex: none; width: 18px; height: 18px; border-radius: 50%; background: #17a085; color: #fff; font-size: 12px; line-height: 18px; text-align: center; }
.ava.big { width: 28px; height: 28px; font-size: 19px; line-height: 28px; margin-left: 38px; }
.dtools { margin-left: auto; margin-right: 294px; display: flex; gap: 3px; }
.drop { margin-left: 2px; width: 99px; height: 25px; border: 1px solid #ddd; border-radius: 5px; background: #bbb9d2; color: #444; font-size: 9px; line-height: 9px; white-space: nowrap; display: flex; justify-content: center; align-items: center; }
.drop em { font-size: 8px; }

.dbody { flex: 1; min-height: 0; display: flex; overflow: hidden; }
.columns { flex: 1; min-width: 0; display: flex; gap: 4px; padding: 5px 7px 0 6px; overflow: hidden; background: #fafafa; }
.col { flex: 1; min-width: 0; display: flex; flex-direction: column; }
h3 { flex: none; margin: 0 0 4px; height: 20px; display: flex; align-items: center; border-radius: 10px; padding: 0 6px 0 5px; font-size: 11px; color: #fff; background: linear-gradient(#8280c8, #625f9a); text-shadow: 1px 1px 1px #333; white-space: nowrap; }
h3::before { content: ""; width: 10px; margin-right: 0; height: 6px; clip-path: polygon(0 0, 40% 50%, 0 100%); background: #fff; }
h3.open::before { clip-path: polygon(0 20%, 60% 20%, 30% 80%); }
h3 .cnt { margin: 0 0 2px auto; width: 37px; height: 12px; border: 1px solid #fff; border-radius: 6px; font-size: 8px; line-height: 10px; text-align: center; box-shadow: 1px 1px 2px #222; }
h3.open { margin-bottom: 0; }
.form { padding-right: 5px; }
.desc { padding-top: 5px; margin-bottom: 1px; } .treat { padding-top: 4px; margin-bottom: 3px; }
.row { height: 21px; display: flex; align-items: center; }
.lab { flex: none; width: 127px; margin-right: 6px; padding-top: 3px; text-align: right; color: #545381; white-space: nowrap; }
.lab.dot { width: 105px; margin-right: 7px; }
.row .ava { margin-right: 3px; }
.idv { color: #777; }
.grow { flex: 1; } .sel.solo { margin-right: 2px; }
.inp { height: 18px; border: 1px solid #aaa; padding: 0 3px; background: linear-gradient(#eee, #fff 5px); }
.sel.req, .inp.req { border-left: 3px solid #f00; }
.sel.req { padding-left: 2px; }
.spell { text-decoration: underline #d22; }
.w179 { width: 179px; } .w206 { width: 206px; } .w185 { width: 185px; } .inp.w41 { width: 41px; }
.ib { flex: none; display: flex; margin-left: 8px; } .ib.first { margin-left: 10px; }
.cap { flex: 1; height: 20px; margin-left: 6px; display: flex; align-items: center; gap: 4px; padding-left: 4px; border: 1px solid #aaa; border-radius: 10px; background: linear-gradient(#fff, #e2e2e2); }
.desc .cap { margin-right: 4px; }
.swatch { width: 64px; height: 18px; border-radius: 9px; background: #6a5acd; margin-right: 2px; }
.btn { height: 21px; display: flex; align-items: center; gap: 5px; padding: 0 3px; margin-right: 2px; border: 1px solid #aaa; border-radius: 4px; background: linear-gradient(#fff, #ddd); }
.pal { display: grid; grid-template-columns: repeat(3, 4px); gap: 1px; padding: 1px; background: #000; } .pal i { height: 4px; }
.dl { color: #545381; line-height: 13px; }
.editor { flex: 1; min-height: 0; display: flex; flex-direction: column; border: 1px solid #ccc; border-bottom: 0; background: #fff; }
.etb { flex: none; height: 68px; padding: 4px 6px; background: #f8f8f8; border-bottom: 1px solid #ccc; color: #474747; }
.erow { height: 29px; display: flex; align-items: center; }
.e { flex: none; width: 25px; height: 22px; display: flex; align-items: center; justify-content: center; font: 13px/14px "Liberation Sans", Arial, sans-serif; }
.e em { font-family: "Liberation Serif", serif; font-weight: bold; font-size: 15px; } .e sub { font-size: 9px; }
.ew { width: 31px; gap: 3px; } .ew.first { margin-left: 6px; } .ac { border-bottom: 1px solid #aaa; } .ab { background: #474747; color: #fff; padding: 0 2px; border-radius: 2px; }
.et { width: auto; font-size: 12px; gap: 9px; padding: 0 10px; } .om { font-size: 15px; font-weight: normal; }
.e .caret { border-top-color: #474747; border-width: 3px 3px 0; }
.sep { width: 1px; height: 16px; margin: 0 3px; background: #bbb; }
.etext { flex: 1; padding: 18px 18px; font: 12px/18px "Liberation Sans", Arial, sans-serif; color: #333; outline: 0; }

.disc { flex: none; width: 18px; height: 18px; border-radius: 50%; border: 1px solid #aaa; margin-right: 3px; }
.treat .cap { margin-right: 3px; }
.dt { width: 66px; margin-left: 3px; }
.ann { display: flex; align-items: center; gap: 3px; margin-left: 11px; color: #545381; }

.g1, .g2, .g3, .g4 { display: grid; align-items: center; height: 21px; white-space: nowrap; }
.g1 { grid-template-columns: 72px repeat(3, 72px) 68px 72px; }
.g2 { grid-template-columns: 72px repeat(5, 75px); }
.g3 { grid-template-columns: 72px 86px 52px 104px 33px 1fr; } .g3 .lb { color: #545381; }
.g4 { grid-template-columns: 72px 140px 1fr; }
.hd { height: 17px; align-items: end; color: #545381; } .hd.h13 { height: 13px; } .h23 { height: 23px; }
.hd b { line-height: 13px; }
.av { margin-bottom: 4px; } .av .lab { width: 65px; margin-right: 7px; justify-self: end; }
.cell { display: flex; gap: 1px; align-items: center; } .cell .inp { width: 66px; flex: none; } .cell .inp.w41 { width: 41px; }
.inp.r { text-align: right; } .inp.ro { background: #eee; color: #666; } .inp.bad { background: #faa; }

.sub { table-layout: fixed; border-collapse: collapse; background: #fff; font-size: 10px; line-height: 12px; }
table.sub { width: 100%; margin: 4px 0 5px; }
.sub th { height: 19px; padding: 0; font-weight: normal; font-size: 11px; color: #555; background: linear-gradient(#fff, #e2e2e2); border: 1px solid #aaa; }
.sub td { height: 23px; padding: 0 4px; border: 1px solid #aaa; overflow: hidden; }
.t2 td { vertical-align: top; line-height: 14px; }
.t2 tbody tr:first-child td { height: 25px; }
.sub th svg, .mid svg { vertical-align: middle; }
.sub td.mid { text-align: center; padding: 0; } .sub td.rr { text-align: right; }
.pair { display: flex; justify-content: center; gap: 6px; }
.mid .pair { padding-top: 2px; }
.c29 { width: 29px; } .c84 { width: 84px; } .c55 { width: 55px; } .c57 { width: 57px; }
.fl { display: flex; align-items: center; gap: 5px; white-space: nowrap; height: 22px; }
.t2 .fl { align-items: flex-start; }
.raise { padding-bottom: 4px; }
.fname { display: flex; align-items: flex-start; gap: 1px; margin-left: 7px; }
.push { margin-left: auto; display: flex; gap: 5px; align-items: center; }
.calsm { position: relative; width: 20px; height: 20px; } .calsm span { position: absolute; left: 0; right: 0; top: 8px; font-size: 7px; line-height: 10px; text-align: center; color: #444; }
.spill { height: 21px; line-height: 21px; margin: 0 1px; }
.ava.pale { display: inline-block; background: #c3c9cc; vertical-align: middle; }
.dv { width: 18px; } .dthumb { height: 532px; } .dv .up { margin-top: 7px; }
.float { position: absolute; bottom: 3px; } .bl { left: 0; } .br { right: 0; }
footer { flex: none; height: 2px; background: #111; border-top: 1px solid #999; }

.ink { position: absolute; background: #000; z-index: 5; }
.top { left: 188px; right: 2px; top: 69px; height: 9px; }
.lft { left: 200px; top: 64px; width: 9px; height: 361px; }
.rgt { right: 1px; top: 69px; width: 8px; height: 359px; }
.bot { left: 178px; right: 2px; top: 416px; height: 8px; }
.cursor { position: absolute; left: 915px; top: 934px; width: 20px; height: 20px; }
</style>
